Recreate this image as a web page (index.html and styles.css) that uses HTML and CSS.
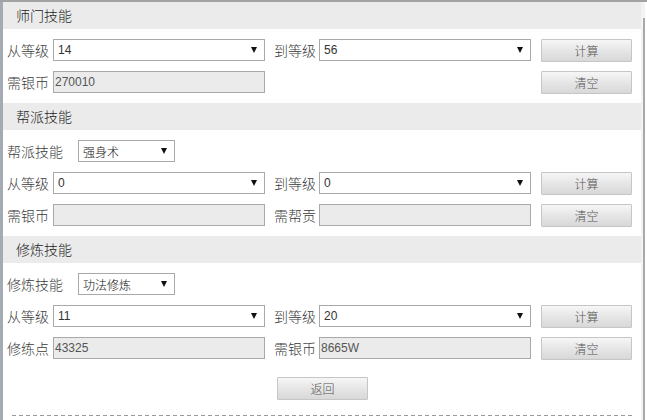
FILE: index.html
```html
<!DOCTYPE html>
<html lang="zh-CN">
<head>
<meta charset="utf-8">
<title>技能计算</title>
<link rel="stylesheet" href="styles.css">
</head>
<body>
<div class="frame">
  <div class="main">
    <section class="sec">
      <div class="sec-head">师门技能</div>
      <div class="row">
        <span class="lbl">从等级</span>
        <div class="sel wide"><span class="val">14</span><i class="arrow"></i></div>
        <span class="lbl lbl-right">到等级</span>
        <div class="sel wide"><span class="val">56</span><i class="arrow"></i></div>
        <button class="btn">计算</button>
      </div>
      <div class="row">
        <span class="lbl">需银币</span>
        <input class="field" readonly value="270010">
        <button class="btn">清空</button>
      </div>
    </section>

    <section class="sec">
      <div class="sec-head">帮派技能</div>
      <div class="row">
        <span class="lbl lbl-skill">帮派技能</span>
        <div class="sel small"><span class="val cjk">强身术</span><i class="arrow"></i></div>
      </div>
      <div class="row">
        <span class="lbl">从等级</span>
        <div class="sel wide"><span class="val">0</span><i class="arrow"></i></div>
        <span class="lbl lbl-right">到等级</span>
        <div class="sel wide"><span class="val">0</span><i class="arrow"></i></div>
        <button class="btn">计算</button>
      </div>
      <div class="row">
        <span class="lbl">需银币</span>
        <input class="field" readonly value="">
        <span class="lbl lbl-right">需帮贡</span>
        <input class="field" readonly value="">
        <button class="btn">清空</button>
      </div>
    </section>

    <section class="sec">
      <div class="sec-head">修炼技能</div>
      <div class="row">
        <span class="lbl lbl-skill">修炼技能</span>
        <div class="sel small"><span class="val cjk">功法修炼</span><i class="arrow"></i></div>
      </div>
      <div class="row">
        <span class="lbl">从等级</span>
        <div class="sel wide"><span class="val">11</span><i class="arrow"></i></div>
        <span class="lbl lbl-right">到等级</span>
        <div class="sel wide"><span class="val">20</span><i class="arrow"></i></div>
        <button class="btn">计算</button>
      </div>
      <div class="row">
        <span class="lbl">修练点</span>
        <input class="field" readonly value="43325">
        <span class="lbl lbl-right">需银币</span>
        <input class="field" readonly value="8665W">
        <button class="btn">清空</button>
      </div>
    </section>

    <div class="footer">
      <button class="btn">返回</button>
    </div>
    <div class="dash"></div>
  </div>
  <div class="strip"><div class="strip-bar"></div></div>
</div>
</body>
</html>
```

FILE: styles.css
```css
html, body {
  margin: 0;
  padding: 0;
  background: #ffffff;
}

body {
  font-family: "Noto Sans CJK SC", "Liberation Sans", sans-serif;
  color: #444;
  overflow: hidden;
}

.frame {
  display: flex;
  width: 647px;
  height: 420px;
  box-sizing: border-box;
  border-top: 2px solid #a2a2a2;
}

.main {
  width: 638px;
  border-left: 3px solid #a4abb3;
  background: #fff;
}

.strip {
  width: 6px;
  display: flex;
  background: #f3f3f3;
}

.strip-bar {
  margin-left: 2px;
  margin-top: 16px;
  width: 2px;
  background: #a9a9a9;
}

.strip::after {
  content: "";
  width: 2px;
  background: #fff;
}

.sec-head {
  height: 27px;
  line-height: 27px;
  background: #ebebeb;
  font-size: 14px;
  font-weight: 300;
  color: #222;
  padding-left: 13px;
}

.row {
  display: flex;
  align-items: center;
  height: 22px;
  margin-top: 10px;
  padding-left: 4px;
  padding-right: 9px;
}

.sec {
  padding-bottom: 10px;
}

.lbl {
  font-size: 14px;
  font-weight: 300;
  line-height: 22px;
  color: #3a3a3a;
  width: 42px;
  margin-right: 4px;
  white-space: nowrap;
}

.lbl-right {
  margin-left: 9px;
  margin-right: 3px;
}

.lbl-skill {
  width: 56px;
  margin-right: 15px;
}

.sel {
  position: relative;
  box-sizing: border-box;
  height: 22px;
  border: 1px solid #a9a9a9;
  background: #fff;
  display: flex;
  align-items: center;
}

.sel.wide {
  width: 212px;
  padding-left: 4px;
}

.sel.small {
  width: 97px;
  padding-left: 4px;
}

.val {
  font-family: "Liberation Sans", Arial, sans-serif;
  font-size: 12px;
  color: #333;
}

.val.cjk {
  font-family: "Noto Sans CJK SC", sans-serif;
  font-size: 12px;
  font-weight: 300;
  color: #111;
}

.arrow {
  position: absolute;
  right: 7px;
  top: 7px;
  width: 0;
  height: 0;
  border-left: 3px solid transparent;
  border-right: 3px solid transparent;
  border-top: 6px solid #111;
}

.field {
  box-sizing: border-box;
  width: 212px;
  height: 22px;
  margin: 0;
  border: 1px solid #a9a9a9;
  background: #ebebeb;
  padding: 0 1px;
  font-family: "Liberation Sans", Arial, sans-serif;
  font-size: 12px;
  color: #555;
  outline: none;
}

.btn {
  box-sizing: border-box;
  width: 91px;
  height: 23px;
  margin: 0 0 0 auto;
  padding: 0;
  border: 1px solid #c6c6c6;
  border-radius: 1px;
  background: linear-gradient(to bottom, #f6f6f6 0%, #e6e6e6 50%, #d8d8d8 100%);
  font-family: "Noto Sans CJK SC", sans-serif;
  font-size: 12px;
  font-weight: 300;
  line-height: 21px;
  color: #555;
  align-self: flex-start;
}

.footer {
  display: flex;
  justify-content: center;
  padding-top: 8px;
}

.footer .btn {
  margin: 0 0 0 1px;
}

.dash {
  height: 1px;
  margin: 15px 7px 0 9px;
  background: repeating-linear-gradient(to right, #9a9a9a 0 4px, transparent 4px 7px);
}
```
